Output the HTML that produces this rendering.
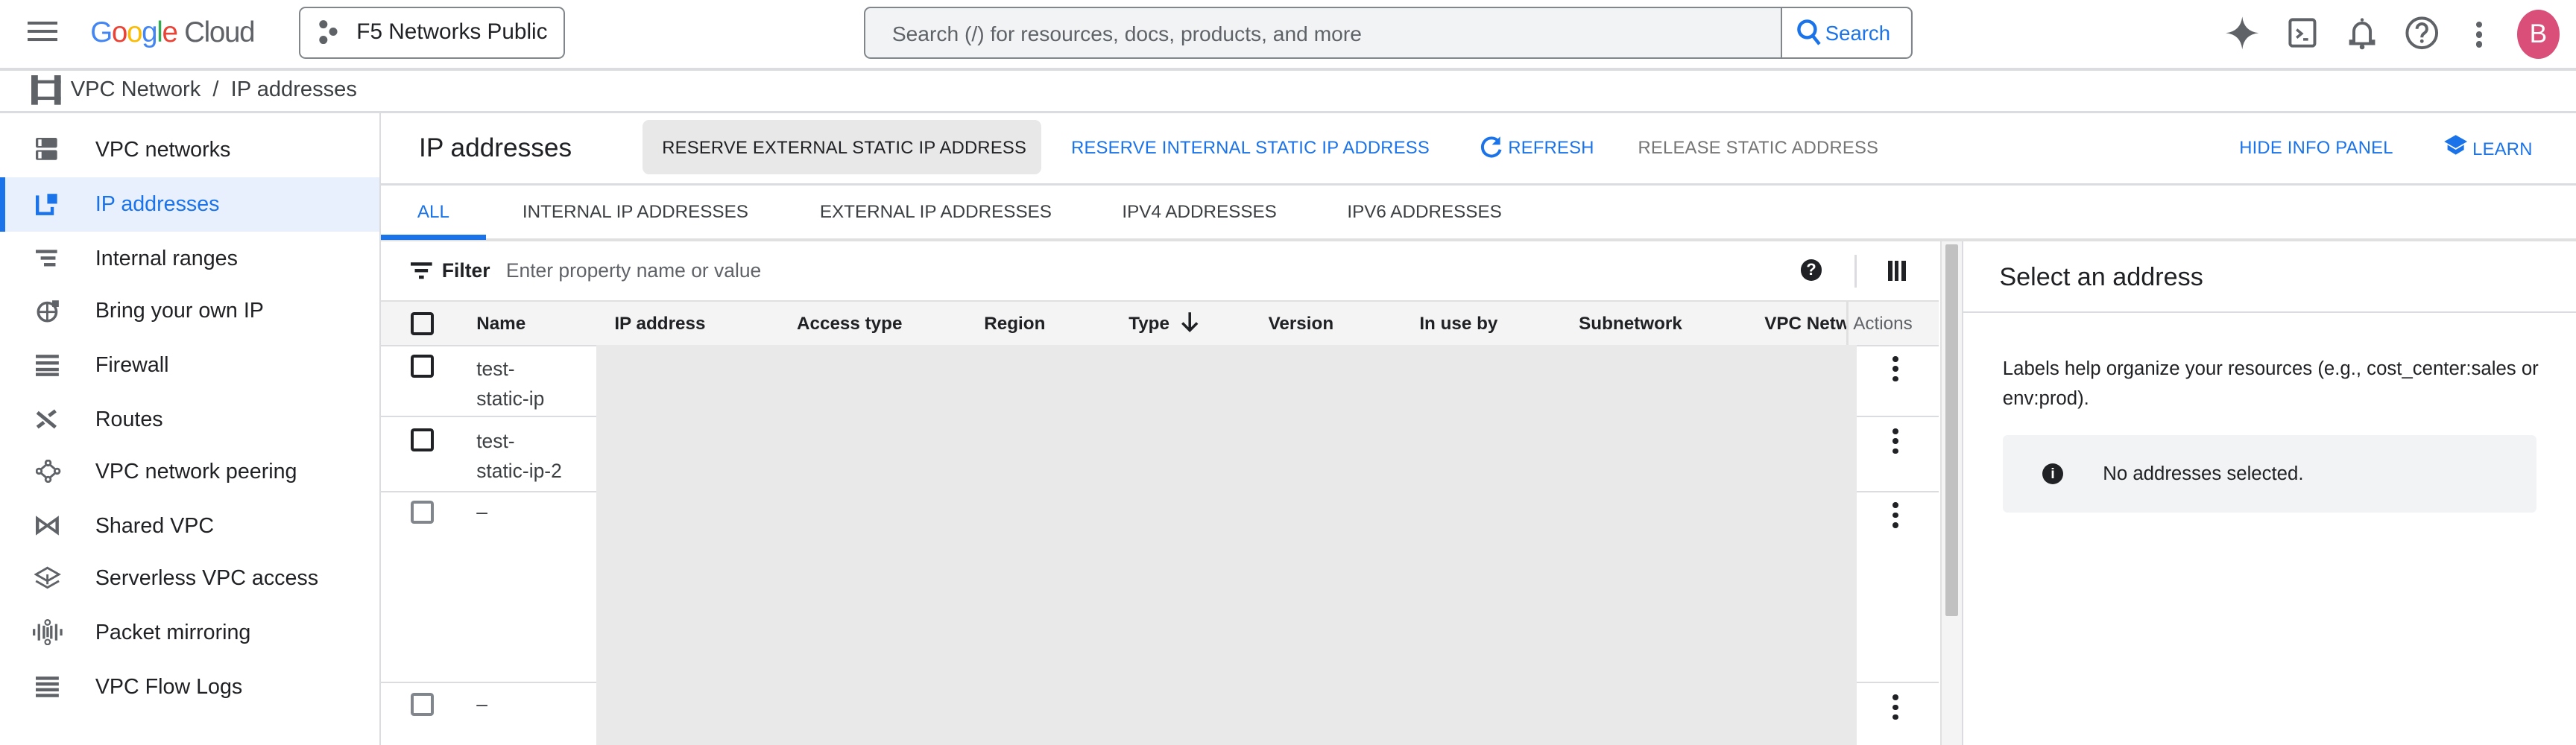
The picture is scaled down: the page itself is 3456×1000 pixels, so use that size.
<!DOCTYPE html>
<html><head><meta charset="utf-8"><style>
*{box-sizing:border-box;margin:0;padding:0}
html,body{width:3456px;height:1000px;overflow:hidden;background:#fff}
#r{zoom:2.2041;width:1568px;height:454px;position:relative;font-family:"Liberation Sans",Arial,sans-serif;color:#202124;overflow:hidden}
.a{position:absolute;white-space:nowrap}
.nav{position:absolute;left:58px;font-size:13px;color:#202124}
.tb{font-size:10.8px;color:#1a73e8;letter-spacing:.1px}
.tab{font-size:11px;color:#3c4043}
.th{position:absolute;top:191px;font-size:11px;font-weight:bold;color:#202124;white-space:nowrap}
.cb{position:absolute;left:250px;width:14px;height:14px;border:2px solid #202124;border-radius:2px}
.dots{position:absolute;left:1152px;width:4px}
.dots i{display:block;width:3.5px;height:3.5px;border-radius:50%;background:#202124;margin-bottom:2.5px}
.hl{position:absolute;height:1px;background:#dadce0}
</style></head><body><div id="r">
<!-- top bar -->
<div class="a" style="left:17px;top:13px;width:18px;height:2px;background:#5f6368;box-shadow:0 5px 0 #5f6368,0 10px 0 #5f6368"></div>
<div class="a" style="left:55px;top:10px;font-size:17.5px;letter-spacing:-.6px"><span style="color:#4285f4">G</span><span style="color:#ea4335">o</span><span style="color:#fbbc05">o</span><span style="color:#4285f4">g</span><span style="color:#34a853">l</span><span style="color:#ea4335">e</span> <span style="color:#5f6368">Cloud</span></div>
<div class="a" style="left:182px;top:4px;width:162px;height:32px;border:1px solid #80868b;border-radius:4px"></div>
<svg class="a" style="left:193px;top:12px" width="14" height="16"><circle cx="4" cy="3" r="2.5" fill="#5f6368"/><circle cx="10" cy="7.5" r="2.5" fill="#5f6368"/><circle cx="4" cy="12.5" r="2.5" fill="#5f6368"/></svg>
<div class="a" style="left:217px;top:12px;font-size:13.5px">F5 Networks Public</div>
<div class="a" style="left:526px;top:4px;width:638px;height:32px;border:1px solid #80868b;border-radius:4px;background:#f1f3f4"></div>
<div class="a" style="left:1084px;top:5px;width:79px;height:30px;background:#fff;border-left:1px solid #80868b;border-radius:0 3px 3px 0"></div>
<div class="a" style="left:543px;top:13px;font-size:12.8px;color:#5f6368">Search (/) for resources, docs, products, and more</div>
<svg class="a" style="left:1093px;top:11px" width="16" height="18"><circle cx="7" cy="7" r="5" fill="none" stroke="#1a73e8" stroke-width="2"/><path d="M10.5 11l4 5" stroke="#1a73e8" stroke-width="2"/></svg>
<div class="a" style="left:1111px;top:13px;font-size:12.5px;color:#1a73e8">Search</div>
<svg class="a" style="left:1354px;top:9px" width="22" height="22"><path d="M11 1Q12 10 21 11Q12 12 11 21Q10 12 1 11Q10 10 11 1Z" fill="#5f6368"/></svg>
<svg class="a" style="left:1392px;top:10px" width="20" height="20"><rect x="2" y="2" width="15" height="16" rx="1.5" fill="none" stroke="#5f6368" stroke-width="1.8"/><path d="M6 8l3 2.5-3 2.5M10 14h3" stroke="#5f6368" stroke-width="1.6" fill="none"/></svg>
<svg class="a" style="left:1428px;top:9px" width="20" height="22"><path d="M5 16V10a5 5 0 0110 0v6h2v1.5H3V16z" fill="none" stroke="#5f6368" stroke-width="1.8"/><circle cx="10" cy="19.5" r="1.5" fill="#5f6368"/><circle cx="10" cy="3" r="1" fill="#5f6368"/></svg>
<svg class="a" style="left:1463px;top:9px" width="22" height="22"><circle cx="11" cy="11" r="9" fill="none" stroke="#5f6368" stroke-width="1.8"/><path d="M8 8.5a3 3 0 115 2.2c-1.3 1-2 1.5-2 3" fill="none" stroke="#5f6368" stroke-width="1.8"/><circle cx="11" cy="16" r="1.1" fill="#5f6368"/></svg>
<div class="a" style="left:1507px;top:13px;width:4px"><i style="display:block;width:4px;height:4px;border-radius:50%;background:#5f6368;margin-bottom:2px"></i><i style="display:block;width:4px;height:4px;border-radius:50%;background:#5f6368;margin-bottom:2px"></i><i style="display:block;width:4px;height:4px;border-radius:50%;background:#5f6368"></i></div>
<div class="a" style="left:1532px;top:6px;width:26px;height:30px;border-radius:50%;background:#d94f7a;color:#fff;font-size:16px;text-align:center;line-height:30px">B</div>
<div class="hl" style="left:0;top:41.5px;width:1568px;height:1.5px"></div>
<!-- breadcrumb -->
<svg class="a" style="left:19px;top:46px" width="19" height="18"><rect x="0" y="0" width="4" height="18" fill="#5f6368"/><rect x="14" y="0" width="4" height="18" fill="#5f6368"/><rect x="0" y="3" width="18" height="2" fill="#5f6368"/><rect x="0" y="13" width="18" height="2" fill="#5f6368"/></svg>
<div class="a" style="left:43px;top:47px;font-size:13.2px;color:#3c4043">VPC Network&nbsp; / &nbsp;IP addresses</div>
<div class="hl" style="left:0;top:67.5px;width:1568px;height:1.5px"></div>
<!-- sidebar -->
<div class="a" style="left:231px;top:69px;width:1px;height:385px;background:#dadce0"></div>
<div class="a" style="left:0;top:108px;width:231px;height:33px;background:#e8f0fe"></div>
<div class="a" style="left:0;top:108px;width:3px;height:33px;background:#1a73e8"></div>
<svg class="a" style="left:22px;top:84px" width="14" height="14"><rect x="0" y="0" width="13" height="6" rx="1" fill="#5f6368"/><rect x="0" y="7.5" width="13" height="6" rx="1" fill="#5f6368"/><rect x="1.5" y="8.5" width="2" height="4" fill="#fff"/><rect x="1.5" y="1" width="2" height="4" fill="#fff"/></svg>
<svg class="a" style="left:22px;top:117px" width="14" height="14"><path d="M1 2v11h9V9" fill="none" stroke="#1a73e8" stroke-width="2"/><rect x="7" y="1" width="6" height="6" fill="#1a73e8"/></svg>
<svg class="a" style="left:22px;top:150px" width="14" height="14"><rect x="0" y="2" width="13" height="2" fill="#5f6368"/><rect x="3" y="6" width="9" height="2" fill="#5f6368"/><rect x="5" y="10" width="7" height="2" fill="#5f6368"/></svg>
<svg class="a" style="left:22px;top:182px" width="15" height="15"><circle cx="7" cy="8" r="5.5" fill="none" stroke="#5f6368" stroke-width="1.6"/><path d="M1.5 8h11M7 2.5v11" stroke="#5f6368" stroke-width="1.3"/><rect x="10" y="1" width="4" height="4" fill="#5f6368"/></svg>
<svg class="a" style="left:22px;top:215px" width="14" height="14"><g fill="#5f6368"><rect x="0" y="1" width="14" height="2"/><rect x="0" y="5" width="14" height="2"/><rect x="0" y="9" width="14" height="2"/><rect x="0" y="12" width="14" height="2"/></g></svg>
<svg class="a" style="left:22px;top:248px" width="14" height="14"><path d="M1 3l11 9M1 12l4-3M8 5l4-3" stroke="#5f6368" stroke-width="2.2"/></svg>
<svg class="a" style="left:22px;top:280px" width="15" height="14"><g fill="none" stroke="#5f6368" stroke-width="1.3"><circle cx="7.5" cy="2" r="1.5"/><circle cx="2" cy="7" r="1.5"/><circle cx="13" cy="7" r="1.5"/><circle cx="7.5" cy="12" r="1.5"/><path d="M6.5 3L3 6M8.5 3l3.5 3M3 8l3.5 3M12 8l-3.5 3"/></g></svg>
<svg class="a" style="left:22px;top:313px" width="14" height="14"><path d="M0 1l7 5 7-5v12l-7-5-7 5z" fill="#5f6368"/><path d="M2 4.5l3.5 2.5L2 9.5zM12 4.5L8.5 7 12 9.5z" fill="#fff"/></svg>
<svg class="a" style="left:21px;top:345px" width="16" height="15"><path d="M8 1l7 4-7 4-7-4zM1 9l7 4 7-4M8 5v6" fill="none" stroke="#5f6368" stroke-width="1.3"/></svg>
<svg class="a" style="left:20px;top:377px" width="18" height="16"><g fill="#5f6368"><rect x="0" y="6" width="1.5" height="4"/><rect x="3" y="3" width="1.5" height="10"/><rect x="13.5" y="3" width="1.5" height="10"/><rect x="16.5" y="6" width="1.5" height="4"/><rect x="6" y="4" width="1.5" height="8"/><rect x="10.5" y="4" width="1.5" height="8"/></g><circle cx="9" cy="2" r="1.5" fill="none" stroke="#5f6368"/><circle cx="9" cy="14" r="1.5" fill="none" stroke="#5f6368"/><rect x="8.3" y="5" width="1.5" height="6" fill="#5f6368"/></svg>
<svg class="a" style="left:22px;top:411px" width="14" height="14"><g fill="#5f6368"><rect x="0" y="1" width="14" height="2"/><rect x="0" y="4.5" width="14" height="2"/><rect x="0" y="8" width="14" height="2"/><rect x="0" y="11.5" width="14" height="2"/></g></svg>
<div class="nav" style="top:84px">VPC networks</div>
<div class="nav" style="top:117px;color:#1a73e8">IP addresses</div>
<div class="nav" style="top:150px">Internal ranges</div>
<div class="nav" style="top:182px">Bring your own IP</div>
<div class="nav" style="top:215px">Firewall</div>
<div class="nav" style="top:248px">Routes</div>
<div class="nav" style="top:280px">VPC network peering</div>
<div class="nav" style="top:313px">Shared VPC</div>
<div class="nav" style="top:345px">Serverless VPC access</div>
<div class="nav" style="top:378px">Packet mirroring</div>
<div class="nav" style="top:411px">VPC Flow Logs</div>
<!-- header actions -->
<div class="a" style="left:255px;top:81px;font-size:16px">IP addresses</div>
<div class="a" style="left:391px;top:73px;width:243px;height:33px;background:#e8e8e8;border-radius:4px"></div>
<div class="a tb" style="left:403px;top:84px;color:#202124">RESERVE EXTERNAL STATIC IP ADDRESS</div>
<div class="a tb" style="left:652px;top:84px">RESERVE INTERNAL STATIC IP ADDRESS</div>
<svg class="a" style="left:900px;top:82px" width="15" height="15"><path d="M12 4A5.5 5.5 0 1013 9" fill="none" stroke="#1a73e8" stroke-width="1.8"/><path d="M13 1v5H8z" fill="#1a73e8"/></svg>
<div class="a tb" style="left:918px;top:84px">REFRESH</div>
<div class="a tb" style="left:997px;top:84px;color:#757575">RELEASE STATIC ADDRESS</div>
<div class="a tb" style="left:1363px;top:84px">HIDE INFO PANEL</div>
<svg class="a" style="left:1487px;top:81px" width="16" height="14"><path d="M8 1l7 4-7 4-7-4z" fill="#1a73e8"/><path d="M3 7v3l5 3 5-3V7L8 10z" fill="#1a73e8"/></svg>
<div class="a tb" style="left:1505px;top:85px">LEARN</div>
<div class="hl" style="left:232px;top:111.5px;width:1336px;height:1.5px"></div>
<!-- tabs -->
<div class="a tab" style="left:254px;top:123px;color:#1a73e8">ALL</div>
<div class="a tab" style="left:318px;top:123px">INTERNAL IP ADDRESSES</div>
<div class="a tab" style="left:499px;top:123px">EXTERNAL IP ADDRESSES</div>
<div class="a tab" style="left:683px;top:123px">IPV4 ADDRESSES</div>
<div class="a tab" style="left:820px;top:123px">IPV6 ADDRESSES</div>
<div class="a" style="left:232px;top:145px;width:1336px;height:2px;background:#e0e0e0"></div>
<div class="a" style="left:232px;top:143px;width:64px;height:3px;background:#1a73e8"></div>
<!-- filter -->
<svg class="a" style="left:250px;top:159px" width="14" height="12"><rect x="0" y="1" width="13" height="2" fill="#202124"/><rect x="2.5" y="5" width="8" height="2" fill="#202124"/><rect x="5" y="9" width="3" height="2" fill="#202124"/></svg>
<div class="a" style="left:269px;top:158px;font-size:12px;font-weight:bold">Filter</div>
<div class="a" style="left:308px;top:158px;font-size:12px;color:#5f6368">Enter property name or value</div>
<div class="a" style="left:1096px;top:158px;width:13px;height:13px;border-radius:50%;background:#202124;color:#fff;font-size:10px;font-weight:bold;text-align:center;line-height:13px">?</div>
<div class="a" style="left:1129px;top:155px;width:1px;height:20px;background:#dadce0"></div>
<div class="a" style="left:1149px;top:159px;width:11px;height:12px;border-left:3px solid #202124;border-right:3px solid #202124"><div style="margin:0 auto;width:2px;height:12px;background:#202124"></div></div>
<!-- table header -->
<div class="a" style="left:232px;top:183px;width:948px;height:28px;background:#f4f4f4;border-top:1px solid #e0e0e0"></div>
<div class="a" style="left:1124px;top:183px;width:1px;height:28px;background:#e0e0e0"></div>
<div class="cb" style="top:190px"></div>
<div class="th" style="left:290px">Name</div>
<div class="th" style="left:374px">IP address</div>
<div class="th" style="left:485px">Access type</div>
<div class="th" style="left:599px">Region</div>
<div class="th" style="left:687px">Type</div>
<svg class="a" style="left:718px;top:189px" width="12" height="14"><path d="M6 1v11M1.5 7.5L6 12l4.5-4.5" fill="none" stroke="#202124" stroke-width="1.6"/></svg>
<div class="th" style="left:772px">Version</div>
<div class="th" style="left:864px">In use by</div>
<div class="th" style="left:961px">Subnetwork</div>
<div class="th" style="left:1074px;width:50px;height:14px;overflow:hidden">VPC Network</div>
<div class="th" style="left:1128px;font-weight:normal;color:#5f6368">Actions</div>
<!-- rows -->
<div class="hl" style="left:232px;top:210px;width:948px"></div>
<div class="hl" style="left:232px;top:253px;width:948px"></div>
<div class="hl" style="left:232px;top:299px;width:948px"></div>
<div class="hl" style="left:232px;top:415px;width:948px"></div>
<div class="cb" style="top:216px"></div>
<div class="cb" style="top:261px"></div>
<div class="cb" style="top:305px;border-color:#80868b"></div>
<div class="cb" style="top:422px;border-color:#80868b"></div>
<div class="a" style="left:290px;top:216px;font-size:12px;color:#3c4043;line-height:18px">test-<br>static-ip</div>
<div class="a" style="left:290px;top:260px;font-size:12px;color:#3c4043;line-height:18px">test-<br>static-ip-2</div>
<div class="a" style="left:290px;top:305px;font-size:12px;color:#3c4043">–</div>
<div class="a" style="left:290px;top:422px;font-size:12px;color:#3c4043">–</div>
<div class="dots" style="top:217px"><i></i><i></i><i></i></div>
<div class="dots" style="top:261px"><i></i><i></i><i></i></div>
<div class="dots" style="top:306px"><i></i><i></i><i></i></div>
<div class="dots" style="top:423px"><i></i><i></i><i></i></div>
<div class="a" style="left:363px;top:210px;width:767px;height:244px;background:#e9e9e9"></div>
<!-- scrollbar -->
<div class="a" style="left:1181px;top:147px;width:13px;height:307px;background:#f4f4f4;border-left:1px solid #e0e0e0"></div>
<div class="a" style="left:1184px;top:149px;width:8px;height:226px;background:#c1c1c1;border-radius:1px"></div>
<div class="a" style="left:1194px;top:147px;width:1px;height:307px;background:#dadce0"></div>
<!-- info panel -->
<div class="a" style="left:1217px;top:160px;font-size:15.5px">Select an address</div>
<div class="hl" style="left:1195px;top:189.5px;width:373px"></div>
<div class="a" style="left:1219px;top:216px;font-size:11.7px;line-height:18px;color:#202124">Labels help organize your resources (e.g., cost_center:sales or<br>env:prod).</div>
<div class="a" style="left:1219px;top:265px;width:325px;height:47px;background:#f1f3f4;border-radius:3px"></div>
<div class="a" style="left:1243px;top:282px;width:13px;height:13px;border-radius:50%;background:#202124;color:#fff;font-size:9px;font-weight:bold;text-align:center;line-height:13px">i</div>
<div class="a" style="left:1280px;top:282px;font-size:11.7px">No addresses selected.</div>
</div></body></html>
